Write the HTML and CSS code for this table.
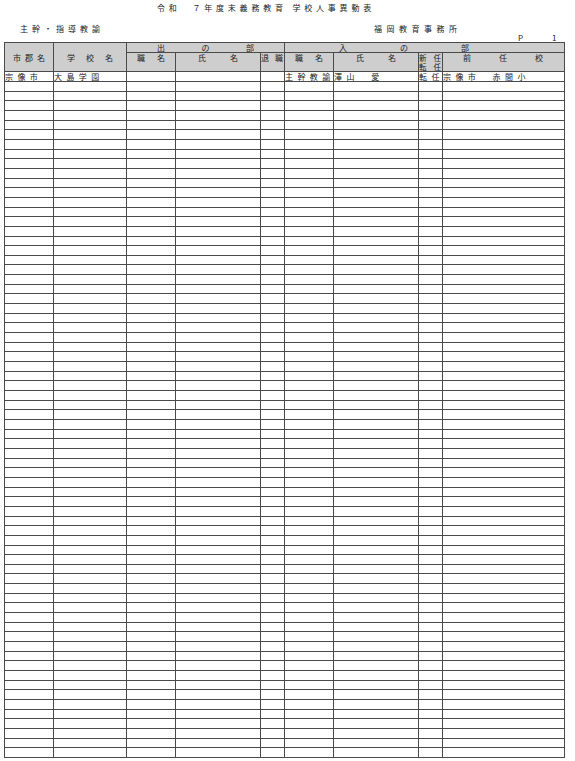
FILE: index.html
```html
<!DOCTYPE html>
<html lang="ja">
<head>
<meta charset="utf-8">
<title>令和７年度末義務教育学校人事異動表</title>
<link rel="stylesheet" href="styles.css">
</head>
<body>
<div class="page">
  <h1 class="title">令和　７年度末義務教育 学校人事異動表</h1>
  <div class="sub">
    <span class="category">主幹・指導教諭</span>
    <span class="office">福岡教育事務所</span>
  </div>
  <div class="pageno"><span>P</span><span class="num">1</span></div>
  <table class="sheet">
    <colgroup>
      <col class="c-city"><col class="c-school"><col class="c-post"><col class="c-name"><col class="c-retire"><col class="c-post"><col class="c-name"><col class="c-new"><col class="c-prev">
    </colgroup>
    <thead>
      <tr class="hA">
        <th rowspan="2" class="mid"><div class="spread p-city"><span>市</span><span>郡</span><span>名</span></div></th>
        <th rowspan="2" class="mid"><div class="spread p-school"><span>学</span><span>校</span><span>名</span></div></th>
        <th colspan="3"><div class="spread p-out"><span>出</span><span>の</span><span>部</span></div></th>
        <th colspan="4"><div class="spread p-in"><span>入</span><span>の</span><span>部</span></div></th>
      </tr>
      <tr class="hB">
        <th><div class="spread p-post"><span>職</span><span>名</span></div></th>
        <th><div class="spread p-name"><span>氏</span><span>名</span></div></th>
        <th><div class="spread p-small"><span>退</span><span>職</span></div></th>
        <th><div class="spread p-post"><span>職</span><span>名</span></div></th>
        <th><div class="spread p-name"><span>氏</span><span>名</span></div></th>
        <th><div class="spread p-small two"><span>新</span><span>任</span></div><div class="spread p-small two"><span>転</span><span>任</span></div></th>
        <th><div class="spread p-prev"><span>前</span><span>任</span><span>校</span></div></th>
      </tr>
    </thead>
    <tbody>
      <tr><td>宗像市</td><td>大島学園</td><td></td><td></td><td></td><td>主幹教諭</td><td>澤山　愛</td><td>転任</td><td>宗像市　赤間小</td></tr>
      <tr><td></td><td></td><td></td><td></td><td></td><td></td><td></td><td></td><td></td></tr>
      <tr><td></td><td></td><td></td><td></td><td></td><td></td><td></td><td></td><td></td></tr>
      <tr><td></td><td></td><td></td><td></td><td></td><td></td><td></td><td></td><td></td></tr>
      <tr><td></td><td></td><td></td><td></td><td></td><td></td><td></td><td></td><td></td></tr>
      <tr><td></td><td></td><td></td><td></td><td></td><td></td><td></td><td></td><td></td></tr>
      <tr><td></td><td></td><td></td><td></td><td></td><td></td><td></td><td></td><td></td></tr>
      <tr><td></td><td></td><td></td><td></td><td></td><td></td><td></td><td></td><td></td></tr>
      <tr><td></td><td></td><td></td><td></td><td></td><td></td><td></td><td></td><td></td></tr>
      <tr><td></td><td></td><td></td><td></td><td></td><td></td><td></td><td></td><td></td></tr>
      <tr><td></td><td></td><td></td><td></td><td></td><td></td><td></td><td></td><td></td></tr>
      <tr><td></td><td></td><td></td><td></td><td></td><td></td><td></td><td></td><td></td></tr>
      <tr><td></td><td></td><td></td><td></td><td></td><td></td><td></td><td></td><td></td></tr>
      <tr><td></td><td></td><td></td><td></td><td></td><td></td><td></td><td></td><td></td></tr>
      <tr><td></td><td></td><td></td><td></td><td></td><td></td><td></td><td></td><td></td></tr>
      <tr><td></td><td></td><td></td><td></td><td></td><td></td><td></td><td></td><td></td></tr>
      <tr><td></td><td></td><td></td><td></td><td></td><td></td><td></td><td></td><td></td></tr>
      <tr><td></td><td></td><td></td><td></td><td></td><td></td><td></td><td></td><td></td></tr>
      <tr><td></td><td></td><td></td><td></td><td></td><td></td><td></td><td></td><td></td></tr>
      <tr><td></td><td></td><td></td><td></td><td></td><td></td><td></td><td></td><td></td></tr>
      <tr><td></td><td></td><td></td><td></td><td></td><td></td><td></td><td></td><td></td></tr>
      <tr><td></td><td></td><td></td><td></td><td></td><td></td><td></td><td></td><td></td></tr>
      <tr><td></td><td></td><td></td><td></td><td></td><td></td><td></td><td></td><td></td></tr>
      <tr><td></td><td></td><td></td><td></td><td></td><td></td><td></td><td></td><td></td></tr>
      <tr><td></td><td></td><td></td><td></td><td></td><td></td><td></td><td></td><td></td></tr>
      <tr><td></td><td></td><td></td><td></td><td></td><td></td><td></td><td></td><td></td></tr>
      <tr><td></td><td></td><td></td><td></td><td></td><td></td><td></td><td></td><td></td></tr>
      <tr><td></td><td></td><td></td><td></td><td></td><td></td><td></td><td></td><td></td></tr>
      <tr><td></td><td></td><td></td><td></td><td></td><td></td><td></td><td></td><td></td></tr>
      <tr><td></td><td></td><td></td><td></td><td></td><td></td><td></td><td></td><td></td></tr>
      <tr><td></td><td></td><td></td><td></td><td></td><td></td><td></td><td></td><td></td></tr>
      <tr><td></td><td></td><td></td><td></td><td></td><td></td><td></td><td></td><td></td></tr>
      <tr><td></td><td></td><td></td><td></td><td></td><td></td><td></td><td></td><td></td></tr>
      <tr><td></td><td></td><td></td><td></td><td></td><td></td><td></td><td></td><td></td></tr>
      <tr><td></td><td></td><td></td><td></td><td></td><td></td><td></td><td></td><td></td></tr>
      <tr><td></td><td></td><td></td><td></td><td></td><td></td><td></td><td></td><td></td></tr>
      <tr><td></td><td></td><td></td><td></td><td></td><td></td><td></td><td></td><td></td></tr>
      <tr><td></td><td></td><td></td><td></td><td></td><td></td><td></td><td></td><td></td></tr>
      <tr><td></td><td></td><td></td><td></td><td></td><td></td><td></td><td></td><td></td></tr>
      <tr><td></td><td></td><td></td><td></td><td></td><td></td><td></td><td></td><td></td></tr>
      <tr><td></td><td></td><td></td><td></td><td></td><td></td><td></td><td></td><td></td></tr>
      <tr><td></td><td></td><td></td><td></td><td></td><td></td><td></td><td></td><td></td></tr>
      <tr><td></td><td></td><td></td><td></td><td></td><td></td><td></td><td></td><td></td></tr>
      <tr><td></td><td></td><td></td><td></td><td></td><td></td><td></td><td></td><td></td></tr>
      <tr><td></td><td></td><td></td><td></td><td></td><td></td><td></td><td></td><td></td></tr>
      <tr><td></td><td></td><td></td><td></td><td></td><td></td><td></td><td></td><td></td></tr>
      <tr><td></td><td></td><td></td><td></td><td></td><td></td><td></td><td></td><td></td></tr>
      <tr><td></td><td></td><td></td><td></td><td></td><td></td><td></td><td></td><td></td></tr>
      <tr><td></td><td></td><td></td><td></td><td></td><td></td><td></td><td></td><td></td></tr>
      <tr><td></td><td></td><td></td><td></td><td></td><td></td><td></td><td></td><td></td></tr>
      <tr><td></td><td></td><td></td><td></td><td></td><td></td><td></td><td></td><td></td></tr>
      <tr><td></td><td></td><td></td><td></td><td></td><td></td><td></td><td></td><td></td></tr>
      <tr><td></td><td></td><td></td><td></td><td></td><td></td><td></td><td></td><td></td></tr>
      <tr><td></td><td></td><td></td><td></td><td></td><td></td><td></td><td></td><td></td></tr>
      <tr><td></td><td></td><td></td><td></td><td></td><td></td><td></td><td></td><td></td></tr>
      <tr><td></td><td></td><td></td><td></td><td></td><td></td><td></td><td></td><td></td></tr>
      <tr><td></td><td></td><td></td><td></td><td></td><td></td><td></td><td></td><td></td></tr>
      <tr><td></td><td></td><td></td><td></td><td></td><td></td><td></td><td></td><td></td></tr>
      <tr><td></td><td></td><td></td><td></td><td></td><td></td><td></td><td></td><td></td></tr>
      <tr><td></td><td></td><td></td><td></td><td></td><td></td><td></td><td></td><td></td></tr>
      <tr><td></td><td></td><td></td><td></td><td></td><td></td><td></td><td></td><td></td></tr>
      <tr><td></td><td></td><td></td><td></td><td></td><td></td><td></td><td></td><td></td></tr>
      <tr><td></td><td></td><td></td><td></td><td></td><td></td><td></td><td></td><td></td></tr>
      <tr><td></td><td></td><td></td><td></td><td></td><td></td><td></td><td></td><td></td></tr>
      <tr><td></td><td></td><td></td><td></td><td></td><td></td><td></td><td></td><td></td></tr>
      <tr><td></td><td></td><td></td><td></td><td></td><td></td><td></td><td></td><td></td></tr>
      <tr><td></td><td></td><td></td><td></td><td></td><td></td><td></td><td></td><td></td></tr>
      <tr><td></td><td></td><td></td><td></td><td></td><td></td><td></td><td></td><td></td></tr>
      <tr><td></td><td></td><td></td><td></td><td></td><td></td><td></td><td></td><td></td></tr>
      <tr><td></td><td></td><td></td><td></td><td></td><td></td><td></td><td></td><td></td></tr>
      <tr><td></td><td></td><td></td><td></td><td></td><td></td><td></td><td></td><td></td></tr>
    </tbody>
  </table>
</div>
</body>
</html>
```

FILE: styles.css
```css
* { box-sizing: border-box; }

html, body {
  margin: 0;
  padding: 0;
  background: #fff;
}

body {
  font-family: "Noto Sans CJK JP", "Noto Sans", sans-serif;
  font-size: 8px;
  color: #222;
}

.page {
  width: 575px;
  padding-left: 4px;
}

.title {
  margin: 0 0 0 153px;
  height: 16px;
  font-size: 8px;
  font-weight: normal;
  line-height: 16px;
  letter-spacing: 3.8px;
  white-space: nowrap;
}

.sub {
  display: flex;
  height: 10px;
  margin-top: 8px;
  line-height: 10px;
  white-space: nowrap;
}

.category {
  margin-left: 16px;
  letter-spacing: 4px;
}

.office {
  margin-left: 270px;
  letter-spacing: 4.5px;
}

.pageno {
  display: flex;
  height: 8px;
  padding-left: 514px;
  line-height: 8px;
}

.pageno .num {
  margin-left: 29px;
}

.sheet {
  width: 561px;
  border-collapse: collapse;
  table-layout: fixed;
}

.c-city { width: 49px; }
.c-school { width: 73px; }
.c-post { width: 49px; }
.c-name { width: 85px; }
.c-retire { width: 24px; }
.c-new { width: 24px; }
.c-prev { width: 122px; }

.sheet th,
.sheet td {
  padding: 0;
  border: 1px solid #4a4a4a;
  font-size: 8px;
  font-weight: normal;
  line-height: 9px;
  white-space: nowrap;
  overflow: hidden;
}

.sheet thead th {
  background-color: #cfcfcf;
  background-image: repeating-conic-gradient(#b4b4b4 0 25%, #e8e8e8 0 50%);
  background-size: 2px 2px;
}

.hA { height: 10px; }
.hA th { vertical-align: middle; }
.hB { height: 19px; }
.hB th { vertical-align: top; }
.sheet th.mid { vertical-align: middle; }

.spread {
  display: flex;
  justify-content: space-between;
}

.spread.two {
  height: 9px;
  font-size: 7.5px;
}

.p-city { padding: 0 8px; }
.p-school { padding: 0 13px; }
.p-out { padding: 0 30px; }
.p-in { padding: 0 95px 0 54px; }
.p-post { padding: 0 10px; }
.p-name { padding: 0 22px; }
.p-small { padding: 0 1px 0 0; }
.p-prev { padding: 0 21px 0 20px; }

.sheet tbody tr { height: 9.67px; }

.sheet tbody td {
  vertical-align: middle;
  letter-spacing: 4.4px;
}
```
